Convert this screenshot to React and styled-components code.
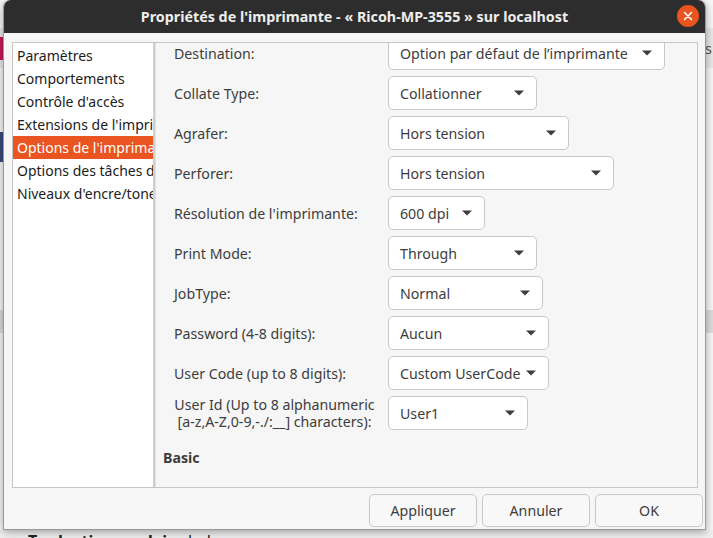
import React from 'react';
import styled, { createGlobalStyle } from 'styled-components';

const GlobalStyle = createGlobalStyle`
  html, body {
    margin: 0;
    padding: 0;
    width: 713px;
    height: 538px;
    overflow: hidden;
    font-family: "Noto Sans", "DejaVu Sans", sans-serif;
  }
  * { box-sizing: border-box; }
`;

const Desktop = styled.div`
  position: relative;
  width: 713px;
  height: 538px;
  overflow: hidden;
  background: #fafafa;
`;

/* page behind the dialog */
const Backdrop = styled.div`
  display: flex;
  flex-direction: column;
  height: 100%;
`;

const Band = styled.div`
  display: flex;
  align-items: center;
  justify-content: space-between;
  height: ${(p) => p.h}px;
  background: ${(p) => p.bg || 'transparent'};
  flex: ${(p) => (p.grow ? 1 : 'none')};
`;

const Chip = styled.div`
  width: 4px;
  height: ${(p) => p.h}px;
  background: ${(p) => p.color};
`;

const EdgeText = styled.span`
  font-size: 15px;
  color: #555;
  padding-right: 1px;
`;

const FootText = styled.div`
  height: 8px;
  padding-left: 28px;
  font-size: 16px;
  line-height: 22px;
  color: #222;
  background: #efefef;
  overflow: hidden;
  b { font-weight: 700; }
`;

const Window = styled.div`
  position: absolute;
  left: 3px;
  top: 0;
  width: 703px;
  height: 530px;
  display: flex;
  flex-direction: column;
  background: #f6f6f6;
  border: 1px solid #9a9a9a;
  border-top: none;
  border-radius: 7px 7px 0 0;
  box-shadow: 0 2px 9px rgba(0, 0, 0, 0.35);
`;

const TitleBar = styled.div`
  position: relative;
  height: 33px;
  flex: none;
  display: flex;
  align-items: center;
  justify-content: center;
  background: #2d2d2d;
  border-radius: 7px 7px 0 0;
  color: #eeeeec;
  font-size: 14.3px;
  font-weight: 700;
`;

const CloseButton = styled.div`
  position: absolute;
  right: 6px;
  top: 5px;
  width: 22px;
  height: 22px;
  border-radius: 50%;
  background: #e95420;
  display: flex;
  align-items: center;
  justify-content: center;
`;

const Body = styled.div`
  flex: 1;
  display: flex;
  flex-direction: column;
  padding: 9px 7px 0 8px;
`;

const Frame = styled.div`
  height: 446px;
  display: flex;
  border: 1px solid #c9c5c0;
  background: #f6f6f6;
`;

const SideList = styled.div`
  width: 140px;
  flex: none;
  background: #ffffff;
  padding-top: 1px;
`;

const SideItem = styled.div`
  height: 23px;
  line-height: 23px;
  padding-left: 4px;
  font-size: 14px;
  white-space: nowrap;
  overflow: hidden;
  color: ${(p) => (p.active ? '#ffffff' : '#1c1c1c')};
  background: ${(p) => (p.active ? '#e95420' : 'transparent')};
`;

const Separator = styled.div`
  width: 3px;
  flex: none;
  background: #cfcfcf;
  border-right: 1px solid #e2e2e2;
`;

const Main = styled.div`
  flex: 1;
  overflow: hidden;
  background: #f6f6f6;
`;

const Scroller = styled.div`
  margin-top: -7px;
  padding-left: 18px;
`;

const Grid = styled.div`
  display: grid;
  grid-template-columns: 201px auto;
  column-gap: 13px;
  row-gap: 6px;
  justify-content: start;
  align-items: center;
`;

const Label = styled.div`
  font-size: 14.2px;
  color: #3d3d3d;
  line-height: 17px;
  text-align: ${(p) => (p.center ? 'center' : 'left')};
  white-space: nowrap;
`;

const Combo = styled.div`
  width: ${(p) => p.w}px;
  height: 34px;
  display: flex;
  align-items: center;
  justify-content: space-between;
  padding: 0 12px 0 11px;
  background: #ffffff;
  border: 1px solid #cdc7c2;
  border-radius: 5px;
  font-size: 14.2px;
  color: #3d3d3d;
  white-space: nowrap;
`;

const SectionTitle = styled.div`
  margin: 18px 0 0 -11px;
  font-size: 14.2px;
  font-weight: 700;
  color: #3d3d3d;
`;

const ButtonRow = styled.div`
  display: flex;
  justify-content: flex-end;
  gap: 5px;
  margin-top: 6px;
  margin-right: -5px;
`;

const DialogButton = styled.div`
  width: 108px;
  height: 33px;
  display: flex;
  align-items: center;
  justify-content: center;
  border: 1px solid #cdc7c2;
  border-radius: 5px;
  background: #f8f8f8;
  font-size: 14.2px;
  color: #3d3d3d;
`;

const Arrow = () => (
  <svg width="10" height="6" viewBox="0 0 10 6">
    <polygon points="0,0.5 10,0.5 5,5.5" fill="#3d3d3d" />
  </svg>
);

const sideItems = [
  'Paramètres',
  'Comportements',
  "Contrôle d'accès",
  "Extensions de l'imprimante",
  "Options de l'imprimante",
  "Options des tâches de l'imprimante",
  "Niveaux d'encre/toner",
];

const options = [
  { label: 'Destination:', value: 'Option par défaut de l’imprimante', w: 277 },
  { label: 'Collate Type:', value: 'Collationner', w: 149 },
  { label: 'Agrafer:', value: 'Hors tension', w: 181 },
  { label: 'Perforer:', value: 'Hors tension', w: 226 },
  { label: "Résolution de l'imprimante:", value: '600 dpi', w: 97 },
  { label: 'Print Mode:', value: 'Through', w: 149 },
  { label: 'JobType:', value: 'Normal', w: 155 },
  { label: 'Password (4-8 digits):', value: 'Aucun', w: 161 },
  { label: 'User Code (up to 8 digits):', value: 'Custom UserCode', w: 161 },
];

export default function App() {
  return (
    <Desktop>
      <GlobalStyle />
      <Backdrop>
        <Band h={28} bg="#f7f7f7" />
        <Band h={40} bg="#e8e8e8">
          <Chip h={23} color="#c4195c" />
          <EdgeText>s</EdgeText>
        </Band>
        <Band h={64} bg="#f7f7f7" />
        <Band h={30} bg="#f7f7f7">
          <Chip h={30} color="#3a4a7c" />
        </Band>
        <Band h={148} bg="#f7f7f7" />
        <Band h={23} bg="#dcdcdc" />
        <Band grow bg="#f7f7f7" />
        <FootText>
          <b>Traduction anglais :</b> below
        </FootText>
      </Backdrop>

      <Window>
        <TitleBar>
          Propriétés de l'imprimante - « Ricoh-MP-3555 » sur localhost
          <CloseButton>
            <svg width="10" height="10" viewBox="0 0 10 10">
              <path d="M1.5 1.5 L8.5 8.5 M8.5 1.5 L1.5 8.5" stroke="#fff" strokeWidth="1.6" strokeLinecap="round" />
            </svg>
          </CloseButton>
        </TitleBar>
        <Body>
          <Frame>
            <SideList>
              {sideItems.map((item, i) => (
                <SideItem key={item} active={i === 4}>
                  {item}
                </SideItem>
              ))}
            </SideList>
            <Separator />
            <Main>
              <Scroller>
                <Grid>
                  {options.map((o) => (
                    <React.Fragment key={o.label}>
                      <Label>{o.label}</Label>
                      <Combo w={o.w}>
                        {o.value}
                        <Arrow />
                      </Combo>
                    </React.Fragment>
                  ))}
                  <Label center>
                    User Id (Up to 8 alphanumeric
                    <br />
                    [a-z,A-Z,0-9,-./:__] characters):
                  </Label>
                  <Combo w={140}>
                    User1
                    <Arrow />
                  </Combo>
                </Grid>
                <SectionTitle>Basic</SectionTitle>
              </Scroller>
            </Main>
          </Frame>
          <ButtonRow>
            <DialogButton>Appliquer</DialogButton>
            <DialogButton>Annuler</DialogButton>
            <DialogButton>OK</DialogButton>
          </ButtonRow>
        </Body>
      </Window>
    </Desktop>
  );
}
